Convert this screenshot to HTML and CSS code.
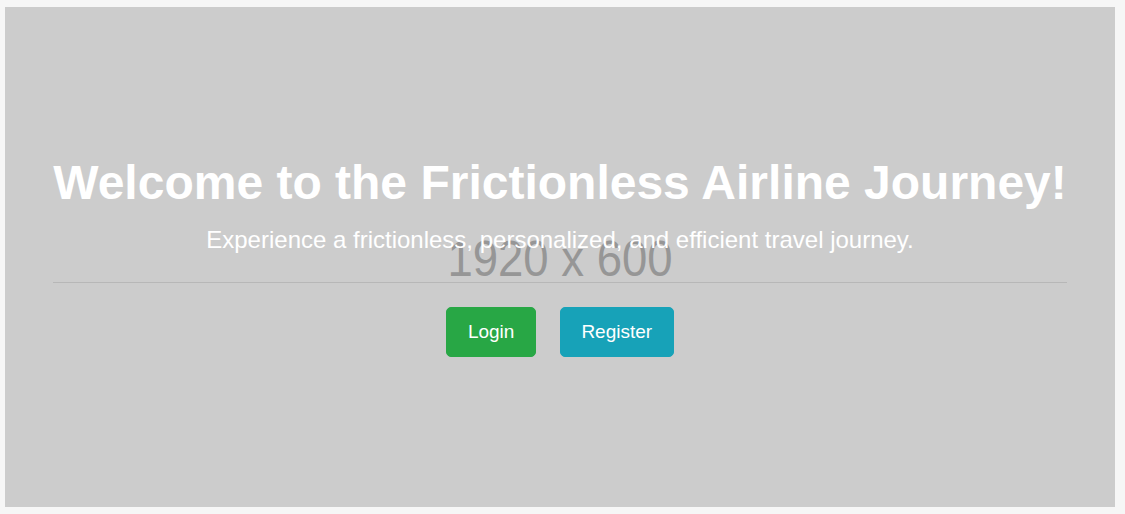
FILE: index.html
```html
<!DOCTYPE html>
<html lang="en">
<head>
<meta charset="utf-8">
<title>Frictionless Airline Journey</title>
<link rel="stylesheet" href="styles.css">
</head>
<body>
<div class="page">
  <section class="hero">
    <div class="placeholder">1920 x 600</div>
    <div class="overlay">
      <h1 class="title">Welcome to the Frictionless Airline Journey!</h1>
      <p class="lead">Experience a frictionless, personalized, and efficient travel journey.</p>
      <hr class="rule">
      <div class="actions">
        <a class="btn btn-login" href="#">Login</a>
        <a class="btn btn-register" href="#">Register</a>
      </div>
    </div>
  </section>
</div>
</body>
</html>
```
FILE: styles.css
```css
html, body {
  margin: 0;
  padding: 0;
  background: #f6f6f6;
  font-family: "Liberation Sans", Arial, sans-serif;
}
.page {
  padding: 7px 10px 7px 5px;
}
.hero {
  position: relative;
  height: 500px;
  background: #cccccc;
  display: flex;
  align-items: center;
  justify-content: center;
}
.placeholder {
  position: absolute;
  left: 0;
  right: 0;
  top: 0;
  bottom: 0;
  display: flex;
  align-items: center;
  justify-content: center;
  padding-top: 5px;
  color: #969696;
  font-size: 45.5px;
  transform: scaleY(1.08);
}
.overlay {
  position: relative;
  text-align: center;
  color: #ffffff;
  margin-top: -3px;
}
.title {
  margin: 0 0 10px;
  font-size: 48px;
  line-height: 1.2;
  font-weight: bold;
}
.lead {
  margin: 0;
  font-size: 24px;
  line-height: 36px;
}
.rule {
  margin: 24px 0;
  border: 0;
  border-top: 1px solid rgba(0, 0, 0, 0.1);
  height: 0;
}
.actions {
  display: flex;
  justify-content: center;
  gap: 24px;
}
.btn {
  display: inline-block;
  box-sizing: border-box;
  height: 50px;
  line-height: 48px;
  padding: 0 20.5px;
  border: 1px solid transparent;
  border-radius: 5px;
  font-size: 19px;
  color: #ffffff;
  text-decoration: none;
}
.btn-login {
  background: #28a745;
  border-color: #28a745;
}
.btn-register {
  background: #17a2b8;
  border-color: #17a2b8;
}
```
